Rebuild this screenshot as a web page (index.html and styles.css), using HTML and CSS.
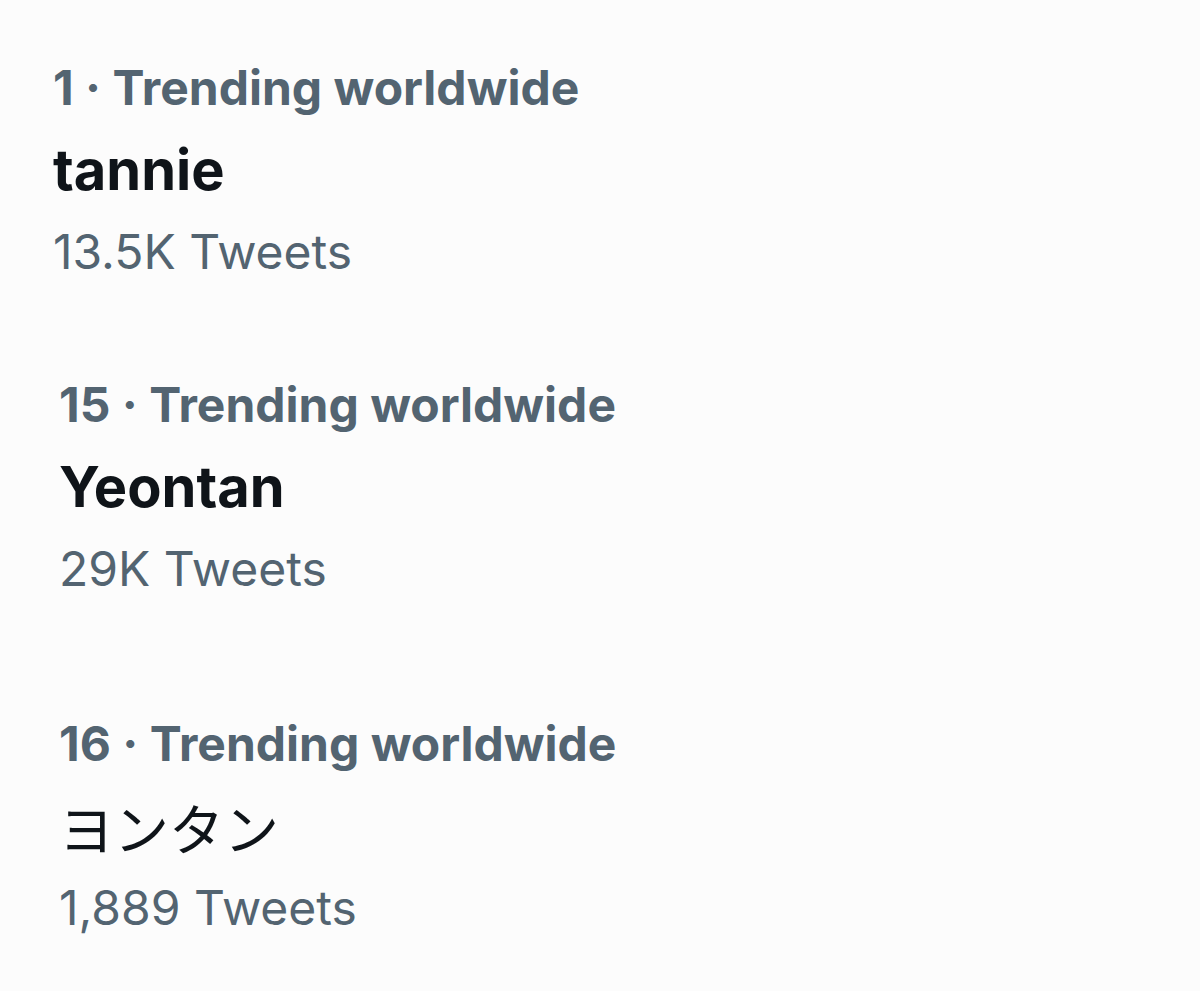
FILE: index.html
```html
<!DOCTYPE html>
<html lang="en">
<head>
<meta charset="utf-8">
<title>Trending</title>
<link rel="stylesheet" href="styles.css">
</head>
<body>
<div class="list">
  <div class="trend trend-first">
    <div class="meta">1 · Trending worldwide</div>
    <div class="name">tannie</div>
    <div class="count">13.5K Tweets</div>
  </div>
  <div class="trend trend-second">
    <div class="meta">15 · Trending worldwide</div>
    <div class="name">Yeontan</div>
    <div class="count">29K Tweets</div>
  </div>
  <div class="trend trend-third">
    <div class="meta">16 · Trending worldwide</div>
    <div class="name name-jp">ヨンタン</div>
    <div class="count">1,889 Tweets</div>
  </div>
</div>
</body>
</html>
```
FILE: styles.css
```css
html, body {
  margin: 0;
  padding: 0;
  background: #fcfcfc;
}
body {
  width: 1200px;
  height: 991px;
  overflow: hidden;
  font-family: Inter, "Noto Sans CJK JP", sans-serif;
}
.list {
  display: flex;
  flex-direction: column;
  padding-top: 48px;
}
.trend {
  display: flex;
  flex-direction: column;
}
.trend-first { padding-left: 53px; }
.trend-second { padding-left: 59px; margin-top: 73px; }
.trend-third { padding-left: 59px; margin-top: 95px; }
.meta {
  font-size: 48px;
  line-height: 80px;
  font-weight: 700;
  color: #536471;
}
.name {
  font-size: 56px;
  line-height: 84px;
  font-weight: 700;
  color: #0f1419;
}
.name-jp {
  font-family: "Noto Sans CJK JP", sans-serif;
  font-size: 55px;
  font-weight: 400;
}
.count {
  font-size: 48px;
  line-height: 80px;
  font-weight: 400;
  color: #536471;
}
```
